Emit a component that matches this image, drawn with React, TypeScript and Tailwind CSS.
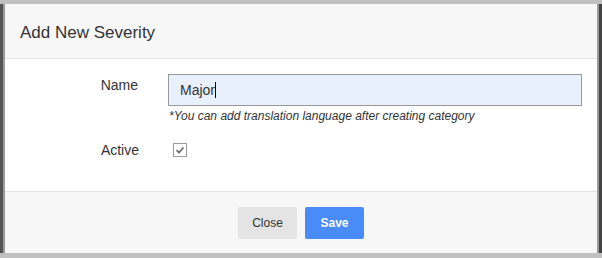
import React from "react";

export default function App() {
  return (
    <div
      className="w-[602px] h-[258px] bg-[#c0c0c0] flex pt-[4px] pb-[5px] overflow-hidden"
      style={{ fontFamily: '"Liberation Sans", Arial, sans-serif' }}
    >
      <div className="w-[3px] bg-[#555]" />
      <div className="w-[2px] bg-[#9a9a9a]" />
      <div className="w-[592px] flex flex-col bg-white">
        <div className="h-[55px] bg-[#f7f7f7] border-b border-[#e5e5e5] flex items-center px-[15px]">
          <span className="text-[17px] text-[#333] leading-none mt-[2px]">Add New Severity</span>
        </div>
        <div className="h-[132px] flex flex-col pt-[15px]">
          <div className="flex">
            <div className="w-[163px] pr-[30px] text-right text-[14px] text-[#333] pt-[1px]">Name</div>
            <div className="flex flex-col">
              <div className="w-[414px] h-[32px] bg-[#e8f0fe] border border-[#999] flex items-center px-[11px] text-[14px] text-[#333]">
                Major<span className="inline-block w-[1px] h-[16px] bg-black ml-[0px]" />
              </div>
              <div className="text-[12px] italic text-[#333] mt-[1px] pl-[1px]">
                *You can add translation language after creating category
              </div>
            </div>
          </div>
          <div className="flex mt-[14px] items-center">
            <div className="w-[163px] pr-[29px] text-right text-[14px] text-[#333] mt-[1px]">Active</div>
            <div className="pl-[5px]">
              <div className="w-[14px] h-[14px] border border-[#9a9a9a] bg-white flex items-center justify-center">
                <svg width="10" height="10" viewBox="0 0 10 10">
                  <path d="M1.5 5.2 L4 7.5 L8.5 2.5" fill="none" stroke="#666" strokeWidth="1.6" />
                </svg>
              </div>
            </div>
          </div>
        </div>
        <div className="flex-1 bg-[#f7f7f7] border-t border-[#e5e5e5] flex justify-center items-start pt-[15px] gap-[8px]">
          <button className="w-[59px] h-[32px] bg-[#e4e4e4] rounded-[2px] text-[12px] text-[#333]">Close</button>
          <button className="w-[59px] h-[32px] bg-[#4a8cf7] rounded-[2px] text-[12px] text-white font-bold">Save</button>
        </div>
      </div>
      <div className="w-[2px] bg-[#9a9a9a]" />
      <div className="w-[3px] bg-[#444]" />
    </div>
  );
}
